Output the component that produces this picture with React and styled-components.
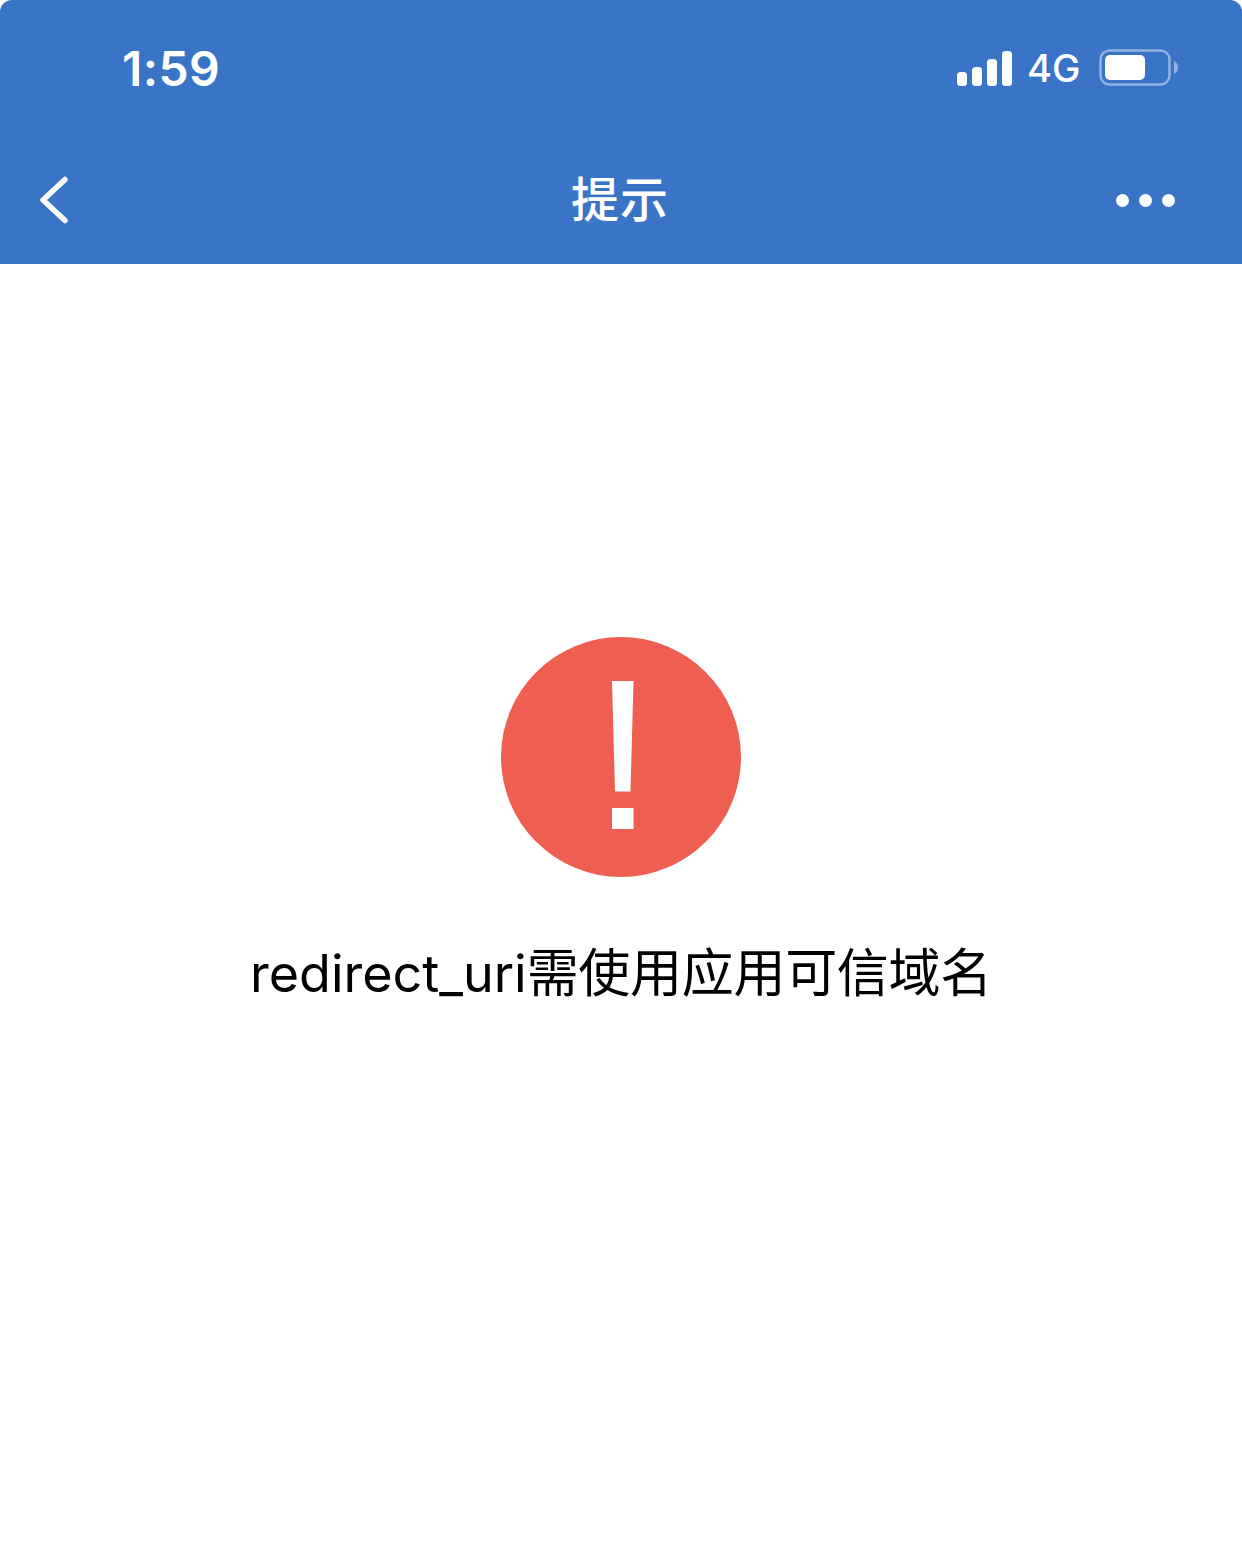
import React from "react";
import styled, { createGlobalStyle } from "styled-components";

const GlobalStyle = createGlobalStyle`
  html, body {
    margin: 0;
    padding: 0;
    background: #fff;
  }
`;

function SignalIcon() {
  return (
    <SignalSvg viewBox="0 0 56 35" fill="#fff">
      <rect x="1" y="21" width="10" height="14" rx="3.5" />
      <rect x="16" y="16" width="10" height="19" rx="3.5" />
      <rect x="31" y="8" width="10" height="27" rx="3.5" />
      <rect x="46" y="0" width="10" height="35" rx="3.5" />
    </SignalSvg>
  );
}

function BatteryIcon() {
  return (
    <BatterySvg viewBox="0 0 80 38">
      <rect x="1.5" y="1.5" width="69" height="34" rx="9" fill="none" stroke="#fff" strokeOpacity="0.45" strokeWidth="2.5" />
      <rect x="6" y="6" width="40" height="25" rx="5" fill="#fff" />
      <path d="M75 12c2.500 1 4 3.500 4 6.500s-1.500 5.500-4 6.500z" fill="#fff" fillOpacity="0.45" />
    </BatterySvg>
  );
}

function BackIcon() {
  return (
    <BackSvg viewBox="0 0 30 48" fill="none">
      <path d="M26 3.500 4 24l22 20.500" stroke="#fff" strokeWidth="5.500" strokeLinecap="round" strokeLinejoin="round" />
    </BackSvg>
  );
}

function WarnIcon() {
  return (
    <WarnSvg viewBox="0 0 240 240">
      <circle cx="120" cy="120" r="120" fill="#ee5f52" />
      <path d="M111 44h21.500l-3 110.500h-15.500zM111 171h21.500v21h-21.500z" fill="#fff" />
    </WarnSvg>
  );
}

function App() {
  return (
    <Page>
      <GlobalStyle />
      <Header>
        <StatusBar>
          <Clock>1:59</Clock>
          <StatusRight>
            <SignalIcon />
            <Network>4G</Network>
            <BatteryIcon />
          </StatusRight>
        </StatusBar>
        <NavBar>
          <BackIcon />
          <Title>提示</Title>
          <MoreDots>
            <Dot />
            <Dot />
            <Dot />
          </MoreDots>
        </NavBar>
      </Header>
      <Content>
        <WarnIcon />
        <Message>
          <Latin>redirect_uri</Latin>需使用应用可信域名
        </Message>
      </Content>
    </Page>
  );
}

const Page = styled.div`
  width: 1242px;
  height: 1561px;
  background: #fff;
  overflow: hidden;
  font-family: Inter, "Liberation Sans", "Noto Sans CJK SC", sans-serif;
`;

const Header = styled.header`
  height: 264px;
  background: #3974c7;
  border-radius: 12px 12px 0 0;
  color: #fff;
  display: flex;
  flex-direction: column;
`;

const StatusBar = styled.div`
  height: 136px;
  display: flex;
  align-items: center;
  justify-content: space-between;
  padding: 0 63px 0 122px;
`;

const Clock = styled.span`
  font-size: 48px;
  font-weight: 600;
  letter-spacing: 0.4px;
`;

const StatusRight = styled.div`
  display: flex;
  align-items: center;
  gap: 17px;
`;

const SignalSvg = styled.svg`
  width: 56px;
  height: 35px;
`;

const Network = styled.span`
  font-size: 38px;
  font-weight: 500;
  width: 55px;
  margin-left: -2px;
`;

const BatterySvg = styled.svg`
  width: 80px;
  height: 38px;
`;

const NavBar = styled.nav`
  flex: 1;
  display: grid;
  grid-template-columns: 1fr auto 1fr;
  align-items: center;
  padding: 0 67px 0 39px;
`;

const BackSvg = styled.svg`
  width: 30px;
  height: 48px;
`;

const Title = styled.h1`
  margin: 0 0 0 26px;
  padding-bottom: 8px;
  font-size: 48px;
  font-weight: 500;
  line-height: 56px;
  letter-spacing: 1px;
  font-family: "Noto Sans CJK SC", sans-serif;
`;

const MoreDots = styled.div`
  display: flex;
  justify-content: flex-end;
  gap: 10px;
`;

const Dot = styled.span`
  width: 13px;
  height: 13px;
  border-radius: 50%;
  background: #fff;
`;

const Content = styled.main`
  display: flex;
  flex-direction: column;
  align-items: center;
  padding-top: 373px;
`;

const WarnSvg = styled.svg`
  width: 240px;
  height: 240px;
`;

const Message = styled.p`
  margin: 65px 0 0;
  font-size: 52px;
  line-height: 64px;
  color: #000;
  letter-spacing: -0.3px;
`;

const Latin = styled.span`
  letter-spacing: 0;
`;

export default App;
